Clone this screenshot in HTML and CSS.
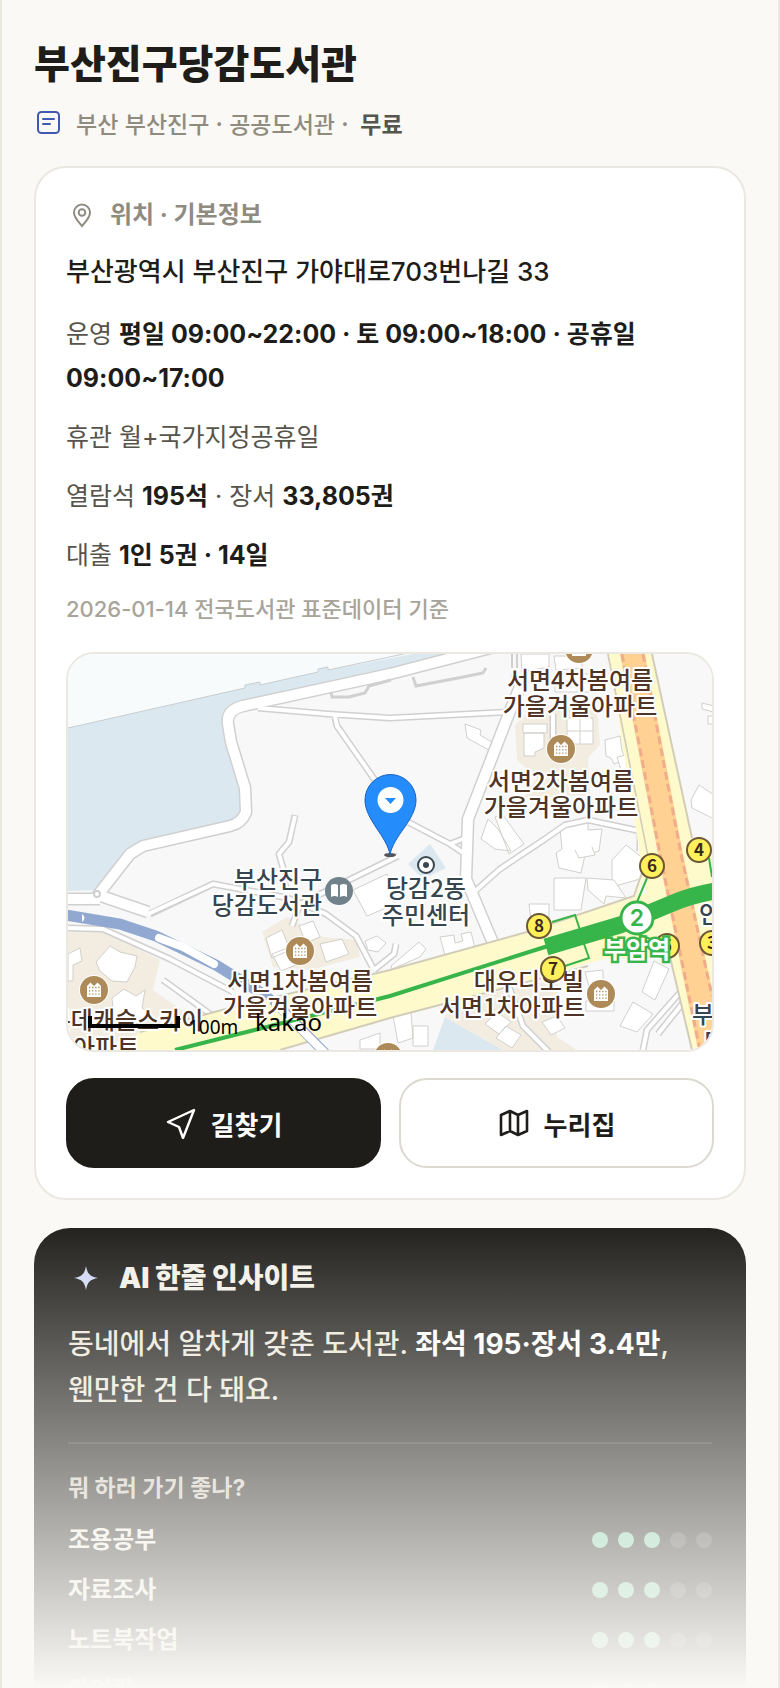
FILE: index.html
```html
<!DOCTYPE html>
<html lang="ko">
<head>
    <meta charset="UTF-8">
    <meta name="viewport" content="width=device-width, initial-scale=1.0">
    <title>부산진구당감도서관</title>
    <link rel="stylesheet" href="styles.css">
</head>
<body>
    <main class="page">
        <header class="header">
            <h1>부산진구당감도서관</h1>
            <p class="meta">
                <svg class="meta-icon" viewBox="0 0 26 26" fill="none" stroke="#3f5aae" stroke-width="2" stroke-linecap="round">
                    <rect x="2" y="2" width="21" height="21" rx="3.500"/>
                    <path d="M7 9h11M7 14h7"/>
                </svg>
                <span>부산 부산진구 · 공공도서관 ·</span>
                <strong>무료</strong>
            </p>
        </header>

        <section class="card">
            <h2 class="card-title">
                <svg class="title-icon" viewBox="0 0 32 32" fill="none" stroke="#8f8b7f" stroke-width="2">
                    <path d="M16 27c-3-4-8-8-8-13.500a8 8 0 0 1 16 0C24 19 19 23 16 27z"/>
                    <circle cx="16" cy="13.500" r="3.300"/>
                </svg>
                위치 · 기본정보
            </h2>
            <p class="address">부산광역시 부산진구 가야대로703번나길 33</p>
            <p class="info">운영 <strong>평일 09:00~22:00 · 토 09:00~18:00 · 공휴일 09:00~17:00</strong></p>
            <p class="info">휴관 월+국가지정공휴일</p>
            <p class="info">열람석 <strong>195석</strong> · 장서 <strong>33,805권</strong></p>
            <p class="info">대출 <strong>1인 5권 · 14일</strong></p>
            <p class="source">2026-01-14 전국도서관 표준데이터 기준</p>

            <div class="map">
                <svg viewBox="0 0 644 396" preserveAspectRatio="xMidYMid slice">
                    <defs>
                        <g id="apt">
                            <circle r="15" fill="#fff"/>
                            <circle r="14" fill="#ad8a57"/>
                            <path d="M-7 7V-4l3.500-3.500L0-4l3.500-3.500L7-4V7z" fill="#fff"/>
                            <path d="M-5-2.500H6M-5 .800H6M-5 4.100H6" stroke="#ad8a57" stroke-width="1.300" stroke-dasharray="1.300 1.800"/>
                        </g>
                    </defs>

                    <!-- ground -->
                    <rect width="644" height="396" fill="#f8f8f8"/>
                    <path d="M0 0H345L322 3 260 16V13l-10 2v3L192 31v-3l-15 3v3L0 74z" fill="#f7fbfb"/>
                    <path d="M0 74 177 34v-3l15-3v3l58-13v-3l10-2v3L345 0H400L322 20 165 52l-5 16 17 66v28l-15 10-90 22-42 42-30 1z" fill="#dce8f0"/>
                    <path d="M0 74 177 34v-3l15-3v3l58-13v-3l10-2v3L345-2" fill="none" stroke="#c9cdd0"/>
                    <path d="M340 210 362 190 378 214 355 225zM377 363 435 396H365z" fill="#dce8f0"/>
                    <path d="M447 71 469 51 529 54 532 91 520 104 522 141 455 144 469 124 449 106zM0 278 35 276 92 306 85 336 132 369 62 386 0 396zM194 278 219 263 255 283 289 286 292 303 242 316 205 313zM389 346 490 325 489 383 509 396H435L377 363z" fill="#f3ede1"/>

                    <!-- buildings -->
                    <g fill="#fff" stroke="#d2d0cc">
                        <path d="M455 70h24v9h-24zM456 79h20v15l-9 4v4h-11zM499 64h26v26h-26zM512 64v26M499 77h26"/>
                        <path d="M453 0h28v13l-27 5zM486 2h28v12l-26 2zM487 20h40v18h-40z"/>
                        <path d="M397 70l16 6-1 5 12 7-3 8-22-12zM537 86l15-4 2 15 4 8-12 5-3-6-5-2z"/>
                        <path d="M549 103l9-2 6 17-11-2zM634 49l12 3v6l-12-3zM640 62h6v8h-6z"/>
                        <path d="M623 146l8-15 15 10v24l-22-11z"/>
                        <path d="M420 165l10 10 13 22-16-2-14-10zM434 160l22 30-15 10-14-37z"/>
                        <path d="M492 174l28-6v8l14-1-3 22-14 4-4 18-22-5-3-15 6-4z"/>
                        <path d="M544 206l14-15 26 20-12 14-28 8z"/>
                        <path d="M486 224h32l-5 32h-27zM519 224l27 2 12 18-20-2-2 8-16-14zM507 196l4 8 16-3-3-8"/>
                        <path d="M461 250h20v14l-18 3zM372 283l14-2 1 8 8-2-2-7 10-2 4 16-30 7z"/>
                        <path d="M323 312l28-24 7 7-6 8-28 12z"/>
                        <path d="M285 236l34-16 8 30-28 12zM297 287l12-5 9 7-8 9-10-2z"/>
                        <path d="M198 284l16-8 8 20-18 8zM204 300l18-7 8 17-17 7zM231 272l14-5 7 16-14 6zM252 290l22-5 7 15-23 8z"/>
                        <path d="M28 308l14-16 10 6 17 4-2 11-8 15-15-1-12-10zM0 300l12-6 2 13-9 4v16H0zM44 344l12-9 12 7 9-6-3 18 6 4-10 12-24-6z"/>
                        <path d="M586 307l15 8-14 31-13-8zM565 348l20 12-16 18-17-6zM517 318l18-2v14l-14 2zM518 347h28v10h-28z"/>
                        <path d="M417 370l12-12 14 10-12 12zM428 384l10-12 15 9-9 13zM474 368l15-6 8 12-14 7zM325 362l18-4 2 26-15 5zM345 372h15v20h-15zM292 386l20-7v16h-20z"/>
                    </g>

                    <!-- streets: grey casing first, white on top -->
                    <g fill="none" stroke="#d0d0d0" stroke-linejoin="round">
                        <g stroke-width="13">
                            <path d="M430-8 322 20 175 52Q158 56 160 70L163 88 177 134 178 158Q174 169 162 172L75 192 62 200 30 241 80 258M-5 245H32"/>
                            <path d="M455 25 440 62 400 165 398 225 428 296"/>
                        </g>
                        <g stroke-width="7">
                            <path d="M190 54 260 60 322 64 440 58M267 64l2 8 42 60M227 161l-6 27-10 12 4 14 10 20M326 172l14-4 42 22 18-7M382 190l18 12M330 202 232 250l-8 22M406 238l26-23 45-30 20-14 23-5 52 11v20M82 260 145 230l75 14 38 16 30 22 18 34M306 316l20-16 2-10"/>
                            <path d="M0 274 35 275 102 305 165 338M95 326 145 362l20 0 38-15M440 330l15 42 26 26M575 396l4-20 44-50M590 380l40-50M485 60v40"/>
                        </g>
                    </g>
                    <g fill="none" stroke="#fff" stroke-linejoin="round">
                        <g stroke-width="10">
                            <path d="M430-8 322 20 175 52Q158 56 160 70L163 88 177 134 178 158Q174 169 162 172L75 192 62 200 30 241 80 258M-5 245H32"/>
                            <path d="M455 25 440 62 400 165 398 225 428 296"/>
                        </g>
                        <g stroke-width="4">
                            <path d="M190 54 260 60 322 64 440 58M267 62l2 10 42 60M227 162l-6 26-10 12 4 14 10 20M326 172l14-4 42 22 18-7M382 190l18 12M330 202 232 250l-8 22M404 240l28-25 45-30 20-14 23-5 52 11v20M80 260 145 230l75 14 38 16 30 22 18 34M306 316l20-16 2-10"/>
                            <path d="M0 274 35 275 102 305 165 338M95 326 145 362l20 0 38-15M440 330l15 42 26 26M575 396l4-20 44-50M590 380l40-50M485 60v40"/>
                        </g>
                    </g>
                    <circle cx="29" cy="240" r="3" fill="#fff" stroke="#d0d0d0" stroke-width="2"/>
                    <path d="M263 38l1 5h17l16-4 4-7 22-6M345 23l3 9 42-8 25-5 3-5" fill="none" stroke="#d0d0d0" stroke-width="3"/>
                    <path d="M444 0v14M449 0v14M444 20v10" stroke="#d0d0d0" stroke-width="2"/>

                    <!-- railway -->
                    <path d="M-2 261 52 270 88 282 148 311 195 340 215 356" fill="none" stroke="#91a9d1" stroke-width="11"/>
                    <path d="M14 260q5 4 0 8z" fill="#fff"/>

                    <!-- main roads -->
                    <path d="M50 396 72 378 165 353 322 316 459 278 578 239 540 0H584L624 184 644 190V396H624L602 303 540 304 389 346 322 364 212 396z" fill="#fffacb"/>
                    <path d="M540 0 580 201 566 242 459 278 322 316 165 353 72 378M584 0 624 184M212 396 322 364 402 343 520 312M602 303 624 396" fill="none" stroke="#d2cdb8" stroke-width="2"/>
                    <path d="M542 0 582 203 568 243" fill="none" stroke="#fffacb" stroke-width="2"/>
                    <path d="M552 0 590 200 630 396H644V336L615 200 577 0z" fill="#ffd294"/>
                    <path d="M554 0 592 200 632 396M575 0 613 200 644 342" fill="none" stroke="#f0ad8c" stroke-width="3" stroke-dasharray="8 4"/>
                    <path d="M205 346 258 400" stroke="#91a9d1" stroke-width="10"/>
                    <path d="M208 350 258 400M91 284 115 293 146 310" fill="none" stroke="#fff" stroke-width="8" stroke-linecap="round"/>

                    <!-- metro line -->
                    <g fill="none" stroke="#38b54a">
                        <path d="M107 396 322 342 480 292" stroke-width="4"/>
                        <path d="M478 293 552 271 605 249Q624 241 648 237" stroke-width="17"/>
                        <path d="M484 268 507 261 512 276M516 290 521 304 497 312M579 224 569 248M570 280 590 288M641 204 644 223" stroke-width="2"/>
                    </g>
                    <circle cx="569" cy="264" r="16" fill="#fff" stroke="#38b54a" stroke-width="3"/>
                    <text class="line-no" x="569" y="272">2</text>

                    <use href="#apt" x="511" y="-5"/>
                    <use href="#apt" x="493" y="95"/>
                    <use href="#apt" x="232" y="297"/>
                    <use href="#apt" x="26" y="336"/>
                    <use href="#apt" x="533" y="340"/>
                    <use href="#apt" x="320" y="403"/>

                    <circle cx="271" cy="237" r="14" fill="#71828b"/>
                    <path d="M263 231q4-2 7 0v12q-3-2-7 0zM272 231q4-2 7 0v12q-3-2-7 0z" fill="#fff"/>
                    <circle cx="358" cy="211" r="8" fill="#fff" stroke="#3b4850" stroke-width="2"/>
                    <circle cx="358" cy="211" r="3" fill="#3b4850"/>

                    <g class="label brown">
                        <text x="512" y="35">서면4차봄여름</text>
                        <text x="512" y="61">가을겨울아파트</text>
                        <text x="493" y="136">서면2차봄여름</text>
                        <text x="493" y="162">가을겨울아파트</text>
                        <text x="232" y="336">서면1차봄여름</text>
                        <text x="232" y="362">가을겨울아파트</text>
                        <text x="58" y="375">롯데캐슬스카이</text>
                        <text x="38" y="402">아파트</text>
                        <text x="461" y="336">대우디오빌</text>
                        <text x="444" y="362">서면1차아파트</text>
                    </g>
                    <g class="label slate">
                        <text x="210" y="234">부산진구</text>
                        <text x="199" y="260">당감도서관</text>
                        <text x="358" y="243">당감2동</text>
                        <text x="358" y="270">주민센터</text>
                        <text x="642" y="269">안</text>
                        <text x="635" y="369">부</text>
                        <text x="646" y="396">모</text>
                    </g>

                    <g class="exit">
                        <circle cx="471" cy="272" r="12"/><text x="471" y="278">8</text>
                        <circle cx="485" cy="315" r="12"/><text x="485" y="321">7</text>
                        <circle cx="584" cy="212" r="12"/><text x="584" y="218">6</text>
                        <circle cx="631" cy="196" r="12"/><text x="631" y="202">4</text>
                        <circle cx="599" cy="292" r="12"/><text x="599" y="298">5</text>
                        <circle cx="644" cy="289" r="12"/><text x="644" y="295">3</text>
                    </g>
                    <text class="station" x="569" y="304">부암역</text>

                    <path d="M22 362v10h88v-10" fill="none" stroke="#000" stroke-width="4"/>
                    <text class="scale" x="120" y="380">100m</text>
                    <text class="brand" x="187" y="377">kakao</text>

                    <!-- pin -->
                    <ellipse cx="322" cy="201" rx="6" ry="2" fill="#555"/>
                    <path d="M322 201C319 182 297 166 297 146a25.500 25.500 0 0 1 51 0C348 166 325 182 322 201z" fill="#258cfb" stroke="#1a62c4"/>
                    <circle cx="322.500" cy="146" r="13" fill="#fff"/>
                    <path d="M317 144h11l-5.500 6z" fill="#258cfb"/>
                </svg>
            </div>

            <div class="actions">
                <button type="button" class="btn btn-dark">
                    <svg viewBox="0 0 32 32" fill="none" stroke="#fff" stroke-width="2.400" stroke-linejoin="round">
                        <path d="M29 3 3 15l11 5 4 11z"/>
                    </svg>
                    길찾기
                </button>
                <a href="#" class="btn">
                    <svg viewBox="0 0 32 32" fill="none" stroke="#1e1d19" stroke-width="2.600" stroke-linejoin="round">
                        <path d="M3 8l9-4 8 4 9-4v20l-9 4-8-4-9 4zM12 4v20M20 8v20"/>
                    </svg>
                    누리집
                </a>
            </div>
        </section>

        <section class="ai-card">
            <h2 class="ai-title">
                <svg viewBox="0 0 36 36">
                    <path d="M18 6c1.500 8 4 10.500 12 12-8 1.500-10.500 4-12 12-1.500-8-4-10.500-12-12 8-1.500 10.500-4 12-12z" fill="#d0d9f5"/>
                </svg>
                AI 한줄 인사이트
            </h2>
            <p class="ai-text">동네에서 알차게 갖춘 도서관. <strong>좌석 195·장서 3.4만</strong>, 웬만한 건 다 돼요.</p>
            <h3>뭐 하러 가기 좋나?</h3>
            <ul class="scores">
                <li>조용공부 <span class="dots"><i class="on"></i><i class="on"></i><i class="on"></i><i></i><i></i></span></li>
                <li>자료조사 <span class="dots"><i class="on"></i><i class="on"></i><i class="on"></i><i></i><i></i></span></li>
                <li>노트북작업 <span class="dots"><i class="on"></i><i class="on"></i><i class="on"></i><i></i><i></i></span></li>
                <li>아이랑 <span class="dots"><i class="on"></i><i class="on"></i><i class="on"></i><i></i><i></i></span></li>
            </ul>
        </section>
        <div class="fade"></div>
    </main>
</body>
</html>
```
FILE: styles.css
```css
* {
    box-sizing: border-box;
}
body {
    margin: 0;
    background-color: #faf9f5;
    color: #1e1d19;
    font-family: Inter, "Noto Sans CJK KR", sans-serif;
    font-weight: 500;
    word-break: keep-all;
}
h1, h2, h3, p, ul {
    margin: 0;
    padding: 0;
}
.page {
    position: relative;
    height: 100vh;
    overflow: hidden;
    padding: 34px 32px 0;
    border-left: 2px solid #eae8e1;
    border-right: 2px solid #eae8e1;
}
h1 {
    font-size: 39px;
    line-height: 60px;
    font-weight: 900;
}
.meta {
    display: flex;
    align-items: center;
    gap: 12px;
    margin: 12px 0 26px;
    font-family: "Noto Sans CJK KR", sans-serif;
    font-size: 23px;
    line-height: 34px;
    color: #8f8b7f;
}
.meta strong {
    color: #57544b;
    font-weight: 700;
}
.meta-icon {
    width: 26px;
    height: 26px;
    margin: 0 2px;
}
.card {
    display: flex;
    flex-direction: column;
    gap: 15px;
    padding: 30px;
    background-color: #fff;
    border: 2px solid #eae8e1;
    border-radius: 32px;
}
.card-title {
    display: flex;
    align-items: center;
    gap: 12px;
    font-size: 24px;
    line-height: 34px;
    color: #8f8b7f;
}
.title-icon {
    width: 32px;
    height: 32px;
}
.address {
    font-size: 26px;
    line-height: 50px;
}
.info {
    font-size: 25px;
    line-height: 44px;
    font-weight: 400;
    color: #57544b;
}
.info strong {
    color: #1e1d19;
    font-weight: 700;
}
.source {
    font-size: 22px;
    line-height: 34px;
    color: #a8a499;
}
.map {
    height: 400px;
    margin: 11px 0;
    border: 2px solid #eae8e1;
    border-radius: 28px;
    overflow: hidden;
}
.map svg {
    display: block;
    width: 100%;
    height: 100%;
}
.map text {
    font-family: "Noto Sans CJK KR", sans-serif;
}
.label text {
    font-size: 24px;
    font-weight: 500;
    text-anchor: middle;
    stroke: #fff;
    stroke-width: 4px;
    stroke-linejoin: round;
    paint-order: stroke;
}
.brown {
    fill: #4d3426;
}
.slate {
    fill: #36454e;
}
.exit circle {
    fill: #fff05c;
    stroke: #6b5636;
    stroke-width: 2px;
}
.exit text {
    font-size: 17px;
    font-weight: 700;
    text-anchor: middle;
    fill: #3d2a1c;
}
.map .line-no {
    font-family: Inter, sans-serif;
    font-size: 23px;
    font-weight: 600;
    text-anchor: middle;
    fill: #38b54a;
}
.station {
    font-size: 24px;
    font-weight: 700;
    text-anchor: middle;
    fill: #fff;
    stroke: #38b54a;
    stroke-width: 5px;
    paint-order: stroke;
}
.map .scale {
    font-family: "Noto Sans", sans-serif;
    font-size: 19px;
    font-weight: 400;
}
.map .brand {
    font-family: "Noto Sans", sans-serif;
    font-size: 24px;
    font-weight: 400;
}
.actions {
    display: grid;
    grid-template-columns: 1fr 1fr;
    gap: 18px;
}
.btn {
    display: flex;
    align-items: center;
    justify-content: center;
    gap: 14px;
    height: 90px;
    border: 2px solid #dcd9d0;
    border-radius: 28px;
    background-color: #fff;
    color: #1e1d19;
    font-family: inherit;
    font-size: 26px;
    font-weight: 700;
    text-decoration: none;
    cursor: pointer;
}
.btn-dark {
    background-color: #1e1d19;
    border-color: #1e1d19;
    color: #fff;
}
.btn svg {
    width: 32px;
    height: 32px;
}
.ai-card {
    margin-top: 28px;
    padding: 32px 34px;
    background-color: #1e1d19;
    border-radius: 36px;
    color: #f3f0e8;
}
.ai-title {
    display: flex;
    align-items: center;
    gap: 15px;
    font-size: 28px;
    line-height: 36px;
    font-weight: 900;
}
.ai-title svg {
    width: 36px;
    height: 36px;
}
.ai-text {
    margin-top: 25px;
    padding-bottom: 29px;
    border-bottom: 2px solid rgba(255, 255, 255, 0.1);
    font-size: 28px;
    line-height: 46px;
    color: #ece8dc;
}
.ai-text strong {
    color: #fff;
    font-weight: 700;
}
h3 {
    margin-top: 28px;
    font-size: 23px;
    line-height: 32px;
    color: #cfcbbf;
}
.scores {
    margin-top: 11px;
    list-style: none;
}
.scores li {
    display: flex;
    align-items: center;
    justify-content: space-between;
    font-size: 24px;
    line-height: 50px;
    font-weight: 600;
}
.dots {
    display: flex;
    gap: 10px;
}
.dots i {
    width: 16px;
    height: 16px;
    border-radius: 50%;
    background-color: rgba(255, 255, 255, 0.16);
}
.dots .on {
    background-color: #7fcfab;
}
.fade {
    position: absolute;
    left: 0;
    right: 0;
    bottom: 0;
    height: 28vh;
    background: linear-gradient(rgba(250, 249, 245, 0), #faf9f5);
    pointer-events: none;
}
```
